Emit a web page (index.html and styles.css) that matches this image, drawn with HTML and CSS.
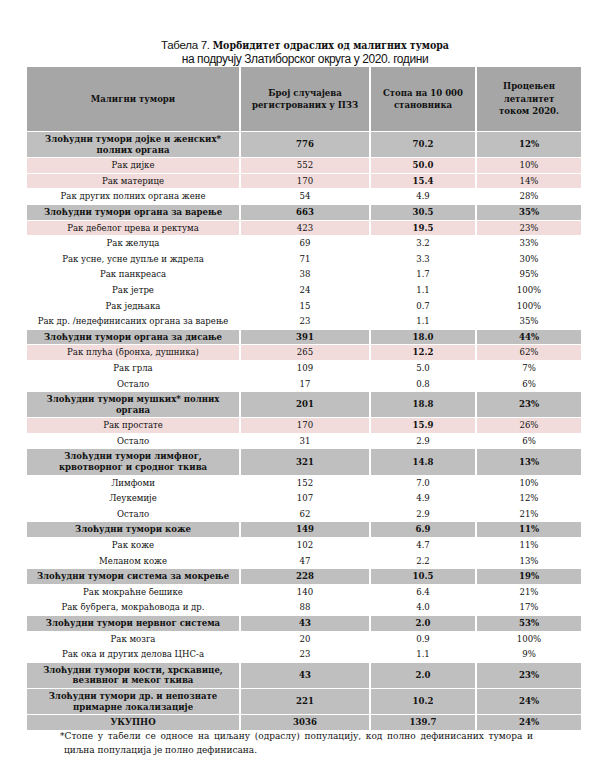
FILE: index.html
```html
<!DOCTYPE html>
<html lang="sr">
<head>
<meta charset="utf-8">
<title>Табела 7</title>
<link rel="stylesheet" href="styles.css">
</head>
<body>
<div class="page">
  <div class="title"><span class="light">Табела 7.</span> <b>Морбидитет одраслих од малигних тумора</b></div>
  <div class="subtitle">на подручју Златиборског округа у 2020. години</div>
  <table class="tbl">
    <colgroup>
      <col class="c1"><col class="c2"><col class="c3"><col class="c4">
    </colgroup>
    <thead>
      <tr>
        <th>Малигни тумори</th>
        <th>Број случајева<br>регистрованих у ПЗЗ</th>
        <th>Стопа на 10 000<br>становника</th>
        <th>Процењен<br>леталитет<br>током 2020.</th>
      </tr>
    </thead>
    <tbody>
      <tr class="grp"><td>Злоћудни тумори дојке и женских*<br>полних органа</td><td>776</td><td>70.2</td><td>12%</td></tr>
      <tr class="pink"><td>Рак дијке</td><td>552</td><td class="b">50.0</td><td>10%</td></tr>
      <tr class="pink"><td>Рак материце</td><td>170</td><td class="b">15.4</td><td>14%</td></tr>
      <tr><td>Рак других полних органа жене</td><td>54</td><td>4.9</td><td>28%</td></tr>
      <tr class="grp"><td>Злоћудни тумори органа за варење</td><td>663</td><td>30.5</td><td>35%</td></tr>
      <tr class="pink"><td>Рак дебелог црева и ректума</td><td>423</td><td class="b">19.5</td><td>23%</td></tr>
      <tr><td>Рак желуца</td><td>69</td><td>3.2</td><td>33%</td></tr>
      <tr><td>Рак усне, усне дупље и ждрела</td><td>71</td><td>3.3</td><td>30%</td></tr>
      <tr><td>Рак панкреаса</td><td>38</td><td>1.7</td><td>95%</td></tr>
      <tr><td>Рак јетре</td><td>24</td><td>1.1</td><td>100%</td></tr>
      <tr><td>Рак једњака</td><td>15</td><td>0.7</td><td>100%</td></tr>
      <tr><td>Рак др. /недефинисаних органа за варење</td><td>23</td><td>1.1</td><td>35%</td></tr>
      <tr class="grp"><td>Злоћудни тумори органа за дисање</td><td>391</td><td>18.0</td><td>44%</td></tr>
      <tr class="pink"><td>Рак плућа (бронха, душника)</td><td>265</td><td class="b">12.2</td><td>62%</td></tr>
      <tr><td>Рак грла</td><td>109</td><td>5.0</td><td>7%</td></tr>
      <tr><td>Остало</td><td>17</td><td>0.8</td><td>6%</td></tr>
      <tr class="grp"><td>Злоћудни тумори мушких* полних<br>органа</td><td>201</td><td>18.8</td><td>23%</td></tr>
      <tr class="pink"><td>Рак простате</td><td>170</td><td class="b">15.9</td><td>26%</td></tr>
      <tr><td>Остало</td><td>31</td><td>2.9</td><td>6%</td></tr>
      <tr class="grp"><td>Злоћудни тумори лимфног,<br>крвотворног и сродног ткива</td><td>321</td><td>14.8</td><td>13%</td></tr>
      <tr><td>Лимфоми</td><td>152</td><td>7.0</td><td>10%</td></tr>
      <tr><td>Леукемије</td><td>107</td><td>4.9</td><td>12%</td></tr>
      <tr><td>Остало</td><td>62</td><td>2.9</td><td>21%</td></tr>
      <tr class="grp"><td>Злоћудни тумори коже</td><td>149</td><td>6.9</td><td>11%</td></tr>
      <tr><td>Рак коже</td><td>102</td><td>4.7</td><td>11%</td></tr>
      <tr><td>Меланом коже</td><td>47</td><td>2.2</td><td>13%</td></tr>
      <tr class="grp"><td>Злоћудни тумори система за мокрење</td><td>228</td><td>10.5</td><td>19%</td></tr>
      <tr><td>Рак мокраћне бешике</td><td>140</td><td>6.4</td><td>21%</td></tr>
      <tr><td>Рак бубрега, мокраћовода и др.</td><td>88</td><td>4.0</td><td>17%</td></tr>
      <tr class="grp"><td>Злоћудни тумори нервног система</td><td>43</td><td>2.0</td><td>53%</td></tr>
      <tr><td>Рак мозга</td><td>20</td><td>0.9</td><td>100%</td></tr>
      <tr><td>Рак ока и других делова ЦНС-а</td><td>23</td><td>1.1</td><td>9%</td></tr>
      <tr class="grp"><td>Злоћудни тумори кости, хрскавице,<br>везивног и меког ткива</td><td>43</td><td>2.0</td><td>23%</td></tr>
      <tr class="grp"><td>Злоћудни тумори др. и непознате<br>примарне локализације</td><td>221</td><td>10.2</td><td>24%</td></tr>
      <tr class="grp"><td>УКУПНО</td><td>3036</td><td>139.7</td><td>24%</td></tr>
    </tbody>
  </table>
  <p class="note">*Стопе у табели се односе на циљану (одраслу) популацију, код полно дефинисаних тумора и циљна популација је полно дефинисана.</p>
</div>
</body>
</html>
```

FILE: styles.css
```css
html, body {
  margin: 0;
  padding: 0;
  background: #ffffff;
}

.page {
  width: 608px;
  padding-top: 38px;
  font-family: "DejaVu Serif", "Liberation Serif", serif;
  font-stretch: condensed;
  color: #111111;
}

.title {
  text-align: center;
  font-size: 10.5px;
  line-height: 14px;
  padding-left: 2px;
}

.title .light {
  font-family: "Liberation Sans", sans-serif;
  font-stretch: normal;
  font-weight: normal;
  font-size: 11.5px;
  letter-spacing: -0.3px;
}

.subtitle {
  text-align: center;
  font-family: "Liberation Sans", sans-serif;
  font-size: 12px;
  line-height: 14px;
  letter-spacing: -0.4px;
  padding-left: 2px;
}

.tbl {
  margin-left: 25px;
  border-collapse: separate;
  border-spacing: 2px 1px;
  table-layout: fixed;
  width: 558px;
  font-size: 9.5px;
}

.c1 { width: 212px; }
.c2 { width: 128px; }
.c3 { width: 104px; }
.c4 { width: 104px; }

.tbl th {
  background: #a6a6a6;
  height: 64px;
  font-weight: bold;
  line-height: 12.5px;
  padding: 0 2px;
  text-align: center;
  vertical-align: middle;
}

.tbl td {
  text-align: center;
  vertical-align: middle;
  line-height: 10.6px;
  padding: 2px 2px;
  white-space: nowrap;
}

.tbl tr.grp td {
  background: #bfbfbf;
  font-weight: bold;
}

.tbl tr.pink td {
  background: #f2dcdb;
}

.tbl td.b {
  font-weight: bold;
}

.note {
  margin: -2px 0 0 64px;
  width: 469px;
  font-size: 10px;
  line-height: 14px;
  text-indent: -4px;
  text-align: justify;
  text-align-last: left;
}
```
